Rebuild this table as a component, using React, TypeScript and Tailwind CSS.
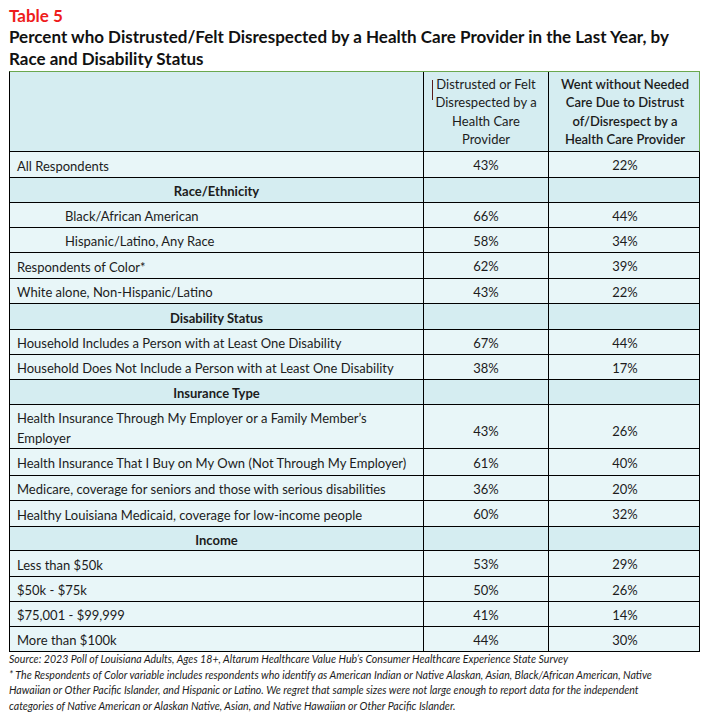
const rows: { label: string; a?: string; b?: string; kind?: "section" | "indent"; h: number; wrap?: boolean }[] = [
  { label: "All Respondents", a: "43%", b: "22%", h: 26 },
  { label: "Race/Ethnicity", kind: "section", h: 25 },
  { label: "Black/African American", a: "66%", b: "44%", kind: "indent", h: 25 },
  { label: "Hispanic/Latino, Any Race", a: "58%", b: "34%", kind: "indent", h: 25 },
  { label: "Respondents of Color*", a: "62%", b: "39%", h: 26 },
  { label: "White alone, Non-Hispanic/Latino", a: "43%", b: "22%", h: 25 },
  { label: "Disability Status", kind: "section", h: 26 },
  { label: "Household Includes a Person with at Least One Disability", a: "67%", b: "44%", h: 25 },
  { label: "Household Does Not Include a Person with at Least One Disability", a: "38%", b: "17%", h: 25 },
  { label: "Insurance Type", kind: "section", h: 25 },
  { label: "Health Insurance Through My Employer or a Family Member\u2019s Employer", a: "43%", b: "26%", h: 44, wrap: true },
  { label: "Health Insurance That I Buy on My Own (Not Through My Employer)", a: "61%", b: "40%", h: 27 },
  { label: "Medicare, coverage for seniors and those with serious disabilities", a: "36%", b: "20%", h: 25 },
  { label: "Healthy Louisiana Medicaid, coverage for low-income people", a: "60%", b: "32%", h: 26 },
  { label: "Income", kind: "section", h: 24 },
  { label: "Less than $50k", a: "53%", b: "29%", h: 26 },
  { label: "$50k - $75k", a: "50%", b: "26%", h: 25 },
  { label: "$75,001 - $99,999", a: "41%", b: "14%", h: 25 },
  { label: "More than $100k", a: "44%", b: "30%", h: 25 },
];

export default function App() {
  return (
    <div className="w-[709px] h-[713px] bg-white text-[#1c1c1c] font-['Lato','Liberation_Sans',sans-serif] pt-[5px]">
      <div className="pl-[9px]">
        <h1 className="text-[17px] font-bold leading-[21px] text-[#ee1c1c]">Table 5</h1>
        <h2 className="w-[685px] text-[17px] font-bold leading-[22px] text-[#111]">
          Percent who Distrusted/Felt Disrespected by a Health Care Provider in the Last Year, by Race and Disability Status
        </h2>
      </div>
      <div className="ml-[9px] mt-[1px] w-[691px] text-[13px]">
        <div className="grid grid-cols-[414px_125px_152px] h-[81px] bg-[#d5edf1] border-t-[1.5px] border-x border-b border-t-[#6aa84f] border-l-black border-r-[#6aa84f] border-b-black">
          <div className="border-r border-black" />
          <div className="relative border-r border-black flex items-center justify-center text-center leading-[18.5px] px-[4px]">
            <span className="absolute left-[8px] top-[8px] w-px h-[20px] bg-[#5a1a1a]" />
            Distrusted or Felt Disrespected by a Health Care Provider
          </div>
          <div className="flex items-center justify-center text-center leading-[18.5px] font-semibold px-[4px]">
            Went without Needed Care Due to Distrust of/Disrespect by a Health Care Provider
          </div>
        </div>
        {rows.map((r) => {
          const section = r.kind === "section";
          return (
            <div
              key={r.label}
              style={{ height: r.h }}
              className={`grid grid-cols-[414px_125px_152px] border-x border-b border-black ${section ? "bg-[#d5edf1]" : "bg-[#e8f6f8]"}`}
            >
              <div
                className={`border-r border-black flex items-center pt-[2px] leading-[20px] ${
                  section
                    ? "justify-center font-bold whitespace-nowrap"
                    : r.kind === "indent"
                      ? "pl-[55px] whitespace-nowrap"
                      : r.wrap
                        ? "pl-[7px] pr-[40px]"
                        : "pl-[7px] whitespace-nowrap"
                }`}
              >
                {r.label}
              </div>
              <div className={`border-r border-black flex items-center justify-center ${r.wrap ? "pt-[10px]" : "pt-[3px]"}`}>{r.a}</div>
              <div className={`flex items-center justify-center ${r.wrap ? "pt-[10px]" : "pt-[3px]"}`}>{r.b}</div>
            </div>
          );
        })}
      </div>
      <div className="pl-[9px] pt-[0px] text-[10.6px] italic leading-[15.7px] text-[#1c1c1c] whitespace-nowrap">
        <p>Source: 2023 Poll of Louisiana Adults, Ages 18+, Altarum Healthcare Value Hub&rsquo;s Consumer Healthcare Experience State Survey</p>
        <p>
          * The Respondents of Color variable includes respondents who identify as American Indian or Native Alaskan, Asian, Black/African American, Native
          <br />
          Hawaiian or Other Pacific Islander, and Hispanic or Latino. We regret that sample sizes were not large enough to report data for the independent
          <br />
          categories of Native American or Alaskan Native, Asian, and Native Hawaiian or Other Pacific Islander.
        </p>
      </div>
    </div>
  );
}
